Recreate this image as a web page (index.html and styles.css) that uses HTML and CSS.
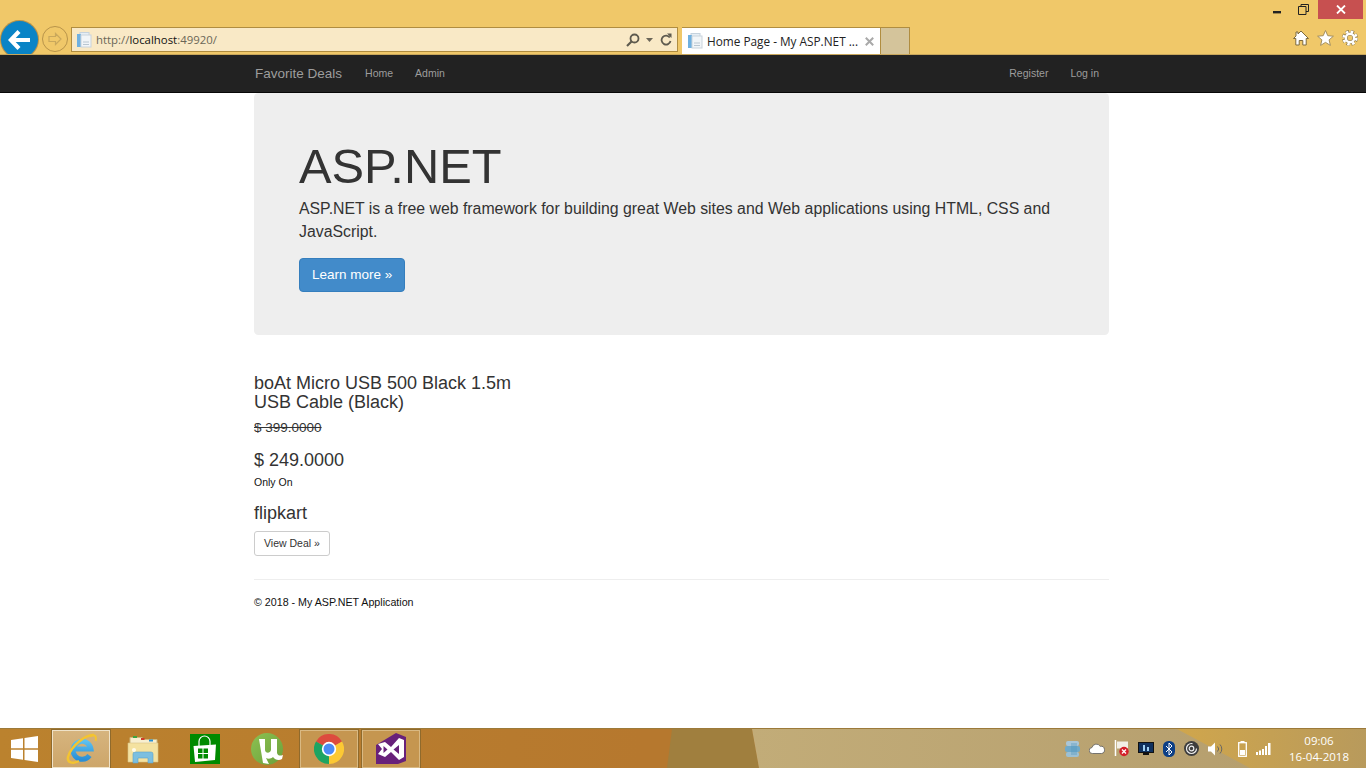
FILE: index.html
```html
<!DOCTYPE html>
<html lang="en">
<head>
<meta charset="utf-8">
<title>Home Page - My ASP.NET Application</title>
<link rel="stylesheet" href="styles.css">
</head>
<body>
<header class="chrome">
  <div class="win-controls">
    <svg class="win-min" width="8" height="3" viewBox="0 0 8 3"><rect width="8" height="2.4" fill="#222"/></svg>
    <svg class="win-restore" width="11" height="11" viewBox="0 0 11 11"><path d="M3 2.500V.5h7.500v7H8M.5 2.500h7.500v8H.5z" fill="none" stroke="#222"/></svg>
    <div class="win-close"><svg width="10" height="9" viewBox="0 0 10 9"><path d="M1 .5l8 8M9 .5l-8 8" stroke="#fff" stroke-width="1.800"/></svg></div>
  </div>
  <div class="toolbar">
    <div class="back"><svg width="24" height="22" viewBox="0 0 24 22"><path d="M11 2.500L2.800 11l8.200 8.500M3.500 11H22" fill="none" stroke="#fff" stroke-width="4.200"/></svg></div>
    <div class="forward"><svg width="16" height="14" viewBox="0 0 16 14"><path d="M8.500 1.500L14 7l-5.500 5.500V9.500H2v-5h6.500z" fill="none" stroke="#c9a85c" stroke-width="1.200"/></svg></div>
    <div class="address">
      <svg class="doc" width="16" height="16" viewBox="0 0 16 16"><rect x="4" y="0.500" width="9" height="12" fill="#e6eef5" stroke="#c5d2dd"/><rect x="1" y="2" width="4" height="13" fill="#6fb0e0"/><rect x="5" y="3" width="10" height="12" fill="#f1f5f8" stroke="#c9d3dc"/><path d="M7 10h6M7 12.500h6" stroke="#b9c6d1"/></svg>
      <span class="url">http://<b>localhost</b>:49920/</span>
      <svg class="addr-icon" width="14" height="14" viewBox="0 0 14 14"><circle cx="8.500" cy="5.500" r="4" fill="none" stroke="#5e5a4e" stroke-width="1.800"/><path d="M5.500 8.500L1 13" stroke="#5e5a4e" stroke-width="2.200"/></svg>
      <svg class="addr-caret" width="7" height="4" viewBox="0 0 7 4"><path d="M0 0h7L3.500 4z" fill="#6b6658"/></svg>
      <svg class="addr-refresh" width="12" height="13" viewBox="0 0 12 13"><path d="M9.800 4.500A4.500 4.500 0 1 0 10.500 8" fill="none" stroke="#5e5a4e" stroke-width="1.800"/><path d="M7 .5h4.500V5z" fill="#5e5a4e"/></svg>
    </div>
    <div class="tabs">
      <div class="tab">
        <svg class="doc" width="16" height="16" viewBox="0 0 16 16"><rect x="4" y="0.500" width="9" height="12" fill="#e6eef5" stroke="#c5d2dd"/><rect x="1" y="2" width="4" height="13" fill="#6fb0e0"/><rect x="5" y="3" width="10" height="12" fill="#f1f5f8" stroke="#c9d3dc"/><path d="M7 10h6M7 12.500h6" stroke="#b9c6d1"/></svg>
        <span class="tab-title">Home Page - My ASP.NET ...</span>
        <svg class="tab-x" width="9" height="9" viewBox="0 0 9 9"><path d="M.8.8l7.400 7.400M8.200.8L.8 8.200" stroke="#a9a9a9" stroke-width="2"/></svg>
      </div>
      <div class="newtab"></div>
    </div>
    <div class="tools">
      <svg width="16" height="16" viewBox="0 0 16 16"><path d="M8 1L15.500 8.500H13.200V15H9.800V10.500H6.200V15H2.800V8.500H.5L3 6V2H5V4z" fill="#fff" stroke="#7c6a3e"/></svg>
      <svg width="17" height="16" viewBox="0 0 17 16"><path d="M8.500.5l2.300 5.200 5.600.5-4.300 3.700 1.300 5.500-4.900-3-4.900 3 1.300-5.500L.6 6.200l5.600-.5z" fill="#fff" stroke="#a38f5e"/></svg>
      <svg width="16" height="16" viewBox="0 0 16 16">
        <circle cx="8" cy="8" r="6.300" fill="none" stroke="#8d7a4d" stroke-width="3.400" stroke-dasharray="3.200 1.750"/>
        <circle cx="8" cy="8" r="4.200" fill="none" stroke="#8d7a4d" stroke-width="3.600"/>
        <circle cx="8" cy="8" r="6.300" fill="none" stroke="#fff" stroke-width="2.600" stroke-dasharray="2.500 2.450"/>
        <circle cx="8" cy="8" r="4.200" fill="none" stroke="#fff" stroke-width="2.500"/>
      </svg>
    </div>
  </div>
</header>

<nav class="navbar">
  <div class="nav-inner">
    <a class="brand">Favorite Deals</a>
    <a class="nav-link">Home</a>
    <a class="nav-link">Admin</a>
    <span class="nav-spacer"></span>
    <a class="nav-link">Register</a>
    <a class="nav-link">Log in</a>
  </div>
</nav>

<main class="page">
  <section class="jumbotron">
    <h1 class="hero-title">ASP.NET</h1>
    <p class="lead">ASP.NET is a free web framework for building great Web sites and Web applications using HTML, CSS and JavaScript.</p>
    <a class="btn-primary">Learn more »</a>
  </section>
  <section class="deal">
    <h2 class="deal-title">boAt Micro USB 500 Black 1.5m USB Cable (Black)</h2>
    <p class="price-old"><s>$ 399.0000</s></p>
    <p class="price-new">$ 249.0000</p>
    <p class="only">Only On</p>
    <p class="store">flipkart</p>
    <a class="btn-default">View Deal »</a>
  </section>
  <hr class="rule">
  <footer class="foot">© 2018 - My ASP.NET Application</footer>
</main>

<footer class="taskbar">
  <svg class="taskbar-bg" width="1366" height="40" viewBox="0 0 1366 40" preserveAspectRatio="none">
    <defs>
      <linearGradient id="tbg" x1="0" x2="1" y1="0" y2="0">
        <stop offset="0" stop-color="#bb822e"/><stop offset=".47" stop-color="#b6782e"/>
      </linearGradient>
      <linearGradient id="tbr" x1="0" x2="1" y1="0" y2="0">
        <stop offset="0" stop-color="#c2ac78"/><stop offset="1" stop-color="#b39c6c"/>
      </linearGradient>
      <linearGradient id="tbw" x1="0" x2="1" y1="0" y2="0">
        <stop offset="0" stop-color="#d0a64c"/><stop offset="1" stop-color="#b89a5c"/>
      </linearGradient>
      <linearGradient id="ieb" x1="0" x2="0" y1="0" y2="1">
        <stop offset="0" stop-color="#5cc0f0"/><stop offset="1" stop-color="#2a8fd6"/>
      </linearGradient>
      <linearGradient id="utb" x1="0" x2="1" y1="0" y2="1">
        <stop offset="0" stop-color="#8cc152"/><stop offset="1" stop-color="#6ba03a"/>
      </linearGradient>
    </defs>
    <rect width="1366" height="40" fill="url(#tbg)"/>
    <polygon points="672,0 752,0 759,40 667,40" fill="#a07f3e"/>
    <polygon points="752,0 1366,0 1366,40 759,40" fill="url(#tbr)"/>
    <polygon points="1177,0 1366,0 1366,40 1250,40" fill="url(#tbw)"/>
  </svg>
  <div class="start">
    <svg width="27" height="26" viewBox="0 0 27 26"><path d="M0 4l12-1.700V12.200H0zM13.500 2L27 0v12.200H13.500zM0 13.700h12v10L0 22zM13.500 13.700H27V26l-13.500-2z" fill="#fff"/></svg>
  </div>
  <div class="task task-active">
    <svg width="32" height="32" viewBox="0 0 32 32">
      <path d="M9 16H26A9 9 0 1 0 24.500 22.500" fill="none" stroke="url(#ieb)" stroke-width="5"/>
      <path d="M29 2C21 1 6 13 3 24C2 30 8 31 14 28" fill="none" stroke="#f4c430" stroke-width="2.500"/>
      <path d="M25 3.500C29 1 32 2 30.500 8" fill="none" stroke="#f4c430" stroke-width="2"/>
    </svg>
  </div>
  <div class="task">
    <svg width="32" height="30" viewBox="0 0 32 30">
      <path d="M3 3.500h12l1.500 2H30v8H3z" fill="#f8efcf" stroke="#cdb87e"/>
      <rect x="6" y="2" width="4" height="2" fill="#3ea33e"/><rect x="14" y="4" width="3.500" height="2" fill="#d03a2a"/><rect x="22" y="5.500" width="4" height="2" fill="#2a8fd0"/>
      <path d="M1 9h30v19H1z" fill="#f4e2a0" stroke="#d8c588" stroke-width=".6"/>
      <path d="M6 29V20q0-2 2-2H24q2 0 2 2v9h-5v-5H11v5z" fill="#7cbfe0" stroke="#5da3cb" stroke-width=".6"/>
      <circle cx="7" cy="16" r="2" fill="#fffbe8"/>
    </svg>
  </div>
  <div class="task">
    <svg width="30" height="30" viewBox="0 0 30 30"><rect width="30" height="30" fill="#008a00"/><path d="M9 12V7.500a5.500 5.500 0 0 1 11 0V12" fill="none" stroke="#fff" stroke-width="1.200"/><path d="M3.500 12L26 10.500 25 26l-20 2z" fill="#fff"/><path d="M8 14.500h4.500V19H8zM13.500 14.500H18V19h-4.500zM8 20h4.500v4.500H8zM13.500 20H18v4.500h-4.500z" fill="#008a00"/></svg>
  </div>
  <div class="task">
    <svg width="32" height="32" viewBox="0 0 32 32"><circle cx="16" cy="16" r="16" fill="url(#utb)"/><path d="M8 6h6v11c0 3 5 4 6 0V6h6v14c1 3 3 3 6 2l-1 4c-3 2-7 1-9-2-2 2-5 2-7 1l3 6-6-1z" fill="#fff"/></svg>
  </div>
  <div class="task task-open">
    <svg width="30" height="30" viewBox="0 0 30 30"><path d="M2 7.500A15 15 0 0 1 28 7.500L15 15z" fill="#dd4b3e"/><path d="M28 7.500A15 15 0 0 1 15 30L15 15z" fill="#fcc934"/><path d="M15 30A15 15 0 0 1 2 7.500L15 15z" fill="#1da462"/><circle cx="15" cy="15" r="7.200" fill="#fff"/><circle cx="15" cy="15" r="5.500" fill="#4c8bf5"/></svg>
  </div>
  <div class="task task-open">
    <svg width="30" height="32" viewBox="0 0 30 32"><path d="M0 12L20 0 30 4V28L22 31H0z" fill="#68217a"/><path d="M2 11L9 9 15 14 23 5 28 7V24L23 27 15 19 9 24 2 21 6 16z" fill="#fff"/><path d="M7.500 13V20L11.500 16.500zM17.500 16.500L23 12V21z" fill="#68217a"/></svg>
  </div>
  <div class="tray">
    <svg width="15" height="16" viewBox="0 0 15 16"><rect x="1" y="0" width="13" height="5" rx="2" fill="#a9c6d8"/><rect x="0" y="5" width="15" height="6" rx="2" fill="#6fa9c9"/><rect x="1" y="11" width="13" height="5" rx="2" fill="#9cc0d4"/><rect x="6" y="2" width="6" height="12" fill="#4f95bd" opacity=".35"/></svg>
    <svg width="16" height="11" viewBox="0 0 16 11"><path d="M3.500 10.500a3 3 0 0 1-.5-6 4.500 4.500 0 0 1 8.200-1.200A3.500 3.500 0 0 1 12.500 10.500z" fill="#fff" stroke="#5a5a5a" stroke-width=".8"/></svg>
    <svg width="15" height="17" viewBox="0 0 15 17"><path d="M1.500 0v16" stroke="#fff" stroke-width="1.500"/><path d="M3 1.500h11v7H3z" fill="#f2efe6"/><circle cx="10" cy="11.500" r="4.700" fill="#d3202a"/><path d="M8 9.500l4 4M12 9.500l-4 4" stroke="#fff" stroke-width="1.300"/></svg>
    <svg width="16" height="14" viewBox="0 0 16 14"><rect width="16" height="11" fill="#111"/><rect x="1" y="1" width="14" height="9" fill="#10315f"/><path d="M5 9V3h2v6zM9 9V5h2v4z" fill="#9fd0f2"/><rect x="5" y="11" width="6" height="2" fill="#111"/></svg>
    <svg width="12" height="16" viewBox="0 0 12 16"><rect width="12" height="16" rx="5.500" fill="#0c3f86"/><path d="M3 5l6 6-3 3V2l3 3-6 6" fill="none" stroke="#fff" stroke-width="1"/></svg>
    <svg width="15" height="15" viewBox="0 0 15 15"><circle cx="7.500" cy="7.500" r="7.500" fill="#3d3d3d"/><circle cx="7.500" cy="7.500" r="5" fill="none" stroke="#eee" stroke-width="1.200" stroke-dasharray="24 8"/><circle cx="7.500" cy="7.500" r="2.300" fill="none" stroke="#eee" stroke-width="1.200"/></svg>
    <svg class="tray-vol" width="16" height="14" viewBox="0 0 16 14"><path d="M0 4.500h3L7 .5v13l-4-4H0z" fill="#fff"/><path d="M9.500 4.500a3.500 3.500 0 0 1 0 5M12 2.500a6.500 6.500 0 0 1 0 9" fill="none" stroke="#666" stroke-width="1"/></svg>
    <svg class="tray-batt" width="9" height="16" viewBox="0 0 9 16"><rect x="2.500" y="0" width="4" height="2" fill="#fff"/><rect x=".7" y="1.700" width="7.600" height="13.600" fill="none" stroke="#fff" stroke-width="1.300"/><rect x="2" y="9" width="5" height="5" fill="#fff"/></svg>
    <svg class="tray-net" width="15" height="12" viewBox="0 0 15 12"><path d="M0 9h2v3H0zM3 7.500h2V12H3zM6 6h2v6H6zM9 3h2v9H9zM12 0h2.500v12H12z" fill="#fff"/></svg>
    <div class="clock"><span>09:06</span><span>16-04-2018</span></div>
  </div>
</footer>
</body>
</html>
```
FILE: styles.css
```css
* { box-sizing: border-box; }
html, body { margin: 0; padding: 0; height: 100%; }
body {
  display: flex;
  flex-direction: column;
  height: 768px;
  overflow: hidden;
  background: #fff;
  font-family: "Liberation Sans", Arial, sans-serif;
  color: #333;
}

/* Browser chrome */
.chrome {
  flex: 0 0 55px;
  min-height: 0;
  overflow: hidden;
  background: #f0c869;
  border-bottom: 1px solid #c9a75c;
  display: flex;
  flex-direction: column;
}
.win-controls {
  flex: 0 0 27px;
  display: flex;
  justify-content: flex-end;
  align-items: flex-start;
  padding-right: 3px;
}
.win-min { margin: 11px 17px 0 0; }
.win-restore { margin: 4px 9px 0 0; }
.win-close {
  width: 45px;
  height: 19px;
  background: #c75050;
  display: flex;
  align-items: center;
  justify-content: center;
}
.toolbar {
  flex: 1;
  display: flex;
  align-items: flex-start;
  min-height: 0;
}
.back {
  width: 37px;
  height: 37px;
  margin: -6px 0 0 1px;
  flex: none;
  border-radius: 50%;
  background: #0a84c6;
  box-shadow: 0 0 0 1px #b9934a;
  display: flex;
  align-items: center;
  justify-content: center;
}
.forward {
  width: 26px;
  height: 26px;
  margin: -1px 0 0 4px;
  flex: none;
  border-radius: 50%;
  border: 1px solid #b8944a;
  display: flex;
  align-items: center;
  justify-content: center;
}
.address {
  width: 607px;
  height: 25px;
  margin-left: 3px;
  flex: none;
  background: #f9e9c6;
  border: 1px solid #b08d40;
  display: flex;
  align-items: center;
  padding: 0 5px 0 4px;
}
.doc { flex: none; }
.url {
  margin-left: 4px;
  flex: 1;
  font: 11.4px "Open Sans", sans-serif;
  color: #6b6757;
}
.url b { font-weight: 400; color: #111; }
.addr-caret { margin: 0 7px 0 6px; }
.tabs {
  display: flex;
  margin-left: 4px;
  height: 27px;
  flex: none;
}
.tab {
  width: 199px;
  background: #fff;
  border-top: 1px solid #b08d40;
  border-right: 1px solid #b08d40;
  display: flex;
  align-items: center;
  padding: 0 6px 0 5px;
}
.tab-title {
  margin-left: 4px;
  flex: 1;
  white-space: nowrap;
  font: 11.8px "Open Sans", sans-serif;
  color: #222;
}
.newtab {
  width: 29px;
  background: #d4c49b;
  border: 1px solid #b08d40;
  border-width: 1px 1px 0 0;
}
.tools {
  margin-left: auto;
  padding: 3px 8px 0 0;
  display: flex;
  gap: 8px;
}

/* Site navbar */
.navbar {
  flex: 0 0 38px;
  background: #222;
  border-bottom: 1px solid #080808;
}
.nav-inner {
  width: 855px;
  height: 100%;
  margin-left: 255px;
  padding-bottom: 1px;
  display: flex;
  align-items: center;
  color: #9d9d9d;
  font-size: 10.5px;
}
.brand { font-size: 13.5px; margin-right: 23px; }
.nav-link { margin-right: 22px; }
.nav-link:last-child { margin-right: 11px; }
.nav-spacer { flex: 1; }

/* Page */
.page {
  flex: 1;
  min-height: 0;
  width: 855px;
  margin-left: 254px;
}
.jumbotron {
  height: 242px;
  padding: 47px 45px 0;
  background: #eee;
  border-radius: 4.5px;
}
.hero-title {
  margin: 0;
  font-size: 48.8px;
  font-weight: 400;
  line-height: 52px;
  color: #333;
}
.lead {
  margin: 6px 0 15px;
  font-size: 15.83px;
  line-height: 22.5px;
  color: #333;
}
.btn-primary {
  display: inline-block;
  padding: 7px 12px;
  background: #428bca;
  border: 1px solid #357ebd;
  border-radius: 4px;
  color: #fff;
  font-size: 13.5px;
  line-height: 18px;
}
.deal { width: 285px; padding-top: 39px; }
.deal-title {
  margin: 0;
  font-size: 18px;
  font-weight: 400;
  line-height: 19px;
  color: #333;
}
.price-old {
  margin: 7px 0 0;
  font-size: 13.5px;
  line-height: 17px;
}
.price-new {
  margin: 15px 0 0;
  font-size: 18px;
  line-height: 18px;
}
.only {
  margin: 6px 0 0;
  font-size: 10.5px;
  line-height: 15px;
  color: #111;
}
.store {
  margin: 13px 0 0;
  font-size: 18px;
  line-height: 20px;
}
.btn-default {
  display: inline-block;
  margin-top: 8px;
  padding: 3.5px 9px;
  height: 25px;
  background: #fff;
  border: 1px solid #ccc;
  border-radius: 3px;
  font-size: 10.5px;
  line-height: 15px;
  color: #333;
}
.rule {
  margin: 23px 0 15px;
  border: 0;
  border-top: 1px solid #eee;
}
.foot {
  font-size: 10.7px;
  line-height: 15px;
  color: #111;
}

/* Taskbar */
.taskbar {
  flex: 0 0 40px;
  position: relative;
  display: flex;
  align-items: center;
  border-top: 1px solid #9c7a3a;
}
.taskbar-bg { position: absolute; left: 0; top: 0; width: 100%; height: 100%; }
.start, .task, .tray { position: relative; }
.start {
  width: 52px;
  padding-left: 11px;
  display: flex;
}
.task {
  width: 58px;
  height: 38px;
  margin-right: 4px;
  display: flex;
  align-items: center;
  justify-content: center;
  border: 1px solid transparent;
}
.task-active {
  background: linear-gradient(#d6b47e, #cda66a);
  border: 1px solid #efe2c8;
  outline: 1px solid #8f6a2c;
}
.task-open {
  background: #c59650;
  border: 1px solid #d9b983;
  box-shadow: 0 0 0 1px #8f6a2c;
}
.tray {
  margin-left: auto;
  display: flex;
  align-items: center;
  gap: 9px;
  padding-right: 14px;
}
.tray-batt { margin-left: 5px; }
.clock {
  margin-left: 6px;
  width: 66px;
  display: flex;
  flex-direction: column;
  align-items: center;
  gap: 3px;
  font: 11.5px/13px "Open Sans", sans-serif;
  color: #fff;
}
```
